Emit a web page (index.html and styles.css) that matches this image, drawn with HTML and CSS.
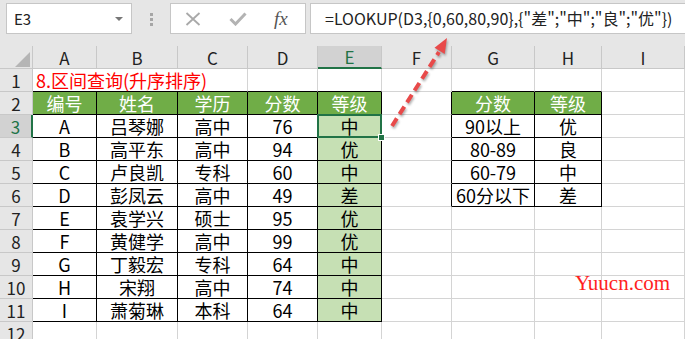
FILE: index.html
```html
<!DOCTYPE html>
<html lang="zh-CN">
<head>
  <meta charset="UTF-8">
  <meta name="viewport" content="width=device-width, initial-scale=1.0">
  <title>区间查询</title>
  <link rel="stylesheet" href="styles.css">
</head>
<body>
  <div class="formula-bar">
    <div class="name-box"><span>E3</span><span class="caret"></span></div>
    <div class="grip"><i></i><i></i><i></i></div>
    <div class="fx-box">
      <svg class="icon-x" width="16" height="14" viewBox="0 0 16 14"><path d="M1.5 1 L14.5 13 M14.5 1 L1.5 13" stroke="#a9a9a9" stroke-width="1.8" fill="none"/></svg>
      <svg class="icon-ok" width="18" height="14" viewBox="0 0 18 14"><path d="M1.5 7 L6.5 12 L16.5 1.5" stroke="#b3b3b3" stroke-width="3" fill="none"/></svg>
      <span class="fx">fx</span>
    </div>
    <div class="formula">=LOOKUP(D3,{0,60,80,90},{"差";"中";"良";"优"})</div>
  </div>

  <div class="sheet">
    <!-- column headers -->
    <div class="corner"><span class="tri"></span></div>
    <div class="hd">A</div><div class="hd">B</div><div class="hd">C</div><div class="hd">D</div>
    <div class="hd sel">E</div><div class="hd">F</div><div class="hd">G</div><div class="hd">H</div><div class="hd">I</div>

    <!-- row 1 -->
    <div class="rh">1</div>
    <div class="title tb">8.区间查询(升序排序)</div>
    <div class="tb"></div><div class="tb"></div><div></div><div class="tb"></div><div class="tb"></div><div></div>

    <!-- row 2 -->
    <div class="rh">2</div>
    <div class="t g">编号</div><div class="t g">姓名</div><div class="t g">学历</div><div class="t g">分数</div><div class="t g">等级</div>
    <div class="tl"></div><div class="t g">分数</div><div class="t g">等级</div><div></div>

    <!-- row 3 -->
    <div class="rh sel">3</div>
    <div class="t">A</div><div class="t">吕琴娜</div><div class="t">高中</div><div class="t">76</div><div class="t lv active">中</div>
    <div class="tl"></div><div class="t">90以上</div><div class="t">优</div><div></div>

    <div class="rh">4</div>
    <div class="t">B</div><div class="t">高平东</div><div class="t">高中</div><div class="t">94</div><div class="t lv">优</div>
    <div class="tl"></div><div class="t">80-89</div><div class="t">良</div><div></div>

    <div class="rh">5</div>
    <div class="t">C</div><div class="t">卢良凯</div><div class="t">专科</div><div class="t">60</div><div class="t lv">中</div>
    <div class="tl"></div><div class="t">60-79</div><div class="t">中</div><div></div>

    <div class="rh">6</div>
    <div class="t">D</div><div class="t">彭凤云</div><div class="t">高中</div><div class="t">49</div><div class="t lv">差</div>
    <div class="tl"></div><div class="t">60分以下</div><div class="t">差</div><div></div>

    <div class="rh">7</div>
    <div class="t">E</div><div class="t">袁学兴</div><div class="t">硕士</div><div class="t">95</div><div class="t lv">优</div>
    <div></div><div></div><div></div><div></div>

    <div class="rh">8</div>
    <div class="t">F</div><div class="t">黄健学</div><div class="t">高中</div><div class="t">99</div><div class="t lv">优</div>
    <div></div><div></div><div></div><div></div>

    <div class="rh">9</div>
    <div class="t">G</div><div class="t">丁毅宏</div><div class="t">专科</div><div class="t">64</div><div class="t lv">中</div>
    <div></div><div></div><div></div><div></div>

    <div class="rh">10</div>
    <div class="t">H</div><div class="t">宋翔</div><div class="t">高中</div><div class="t">74</div><div class="t lv">中</div>
    <div></div><div></div><div></div><div></div>

    <div class="rh">11</div>
    <div class="t">I</div><div class="t">萧菊琳</div><div class="t">本科</div><div class="t">64</div><div class="t lv">中</div>
    <div></div><div></div><div></div><div></div>

    <div class="rh">12</div>
    <div></div><div></div><div></div><div></div><div></div><div></div><div></div><div></div><div></div>
  </div>

  <!-- arrow pointing at the formula -->
  <svg class="arrow" width="685" height="339" viewBox="0 0 685 339">
    <line x1="392" y1="126" x2="439" y2="52" stroke="#e84a4a" stroke-width="4" stroke-dasharray="9 5"/>
    <polygon points="447,38 444.7,54.1 434.5,47.7" fill="#e84a4a"/>
  </svg>

  <div class="watermark">Yuucn.com</div>
</body>
</html>
```

FILE: styles.css
```css
body {
  margin: 0;
  position: relative;
  width: 685px;
  height: 339px;
  overflow: hidden;
  background-color: #fff;
  font-family: "Noto Sans CJK SC", "Noto Sans", sans-serif;
}

/* formula bar */
.formula-bar {
  display: flex;
  align-items: flex-start;
  height: 46px;
  padding-top: 3px;
  box-sizing: border-box;
  background-color: #e6e6e6;
}

.name-box {
  margin-left: 6px;
  width: 126px;
  height: 31px;
  box-sizing: border-box;
  border: 1px solid #c6c6c6;
  background-color: #fff;
  display: flex;
  align-items: center;
  justify-content: space-between;
  padding: 0 8px 0 7px;
  font-size: 15px;
  color: #222;
}

.caret {
  width: 0;
  height: 0;
  border-left: 4px solid transparent;
  border-right: 4px solid transparent;
  border-top: 4px solid #777;
}

.grip {
  width: 38px;
  display: flex;
  flex-direction: column;
  align-items: center;
  gap: 2px;
  padding-top: 10px;
}

.grip i {
  width: 3px;
  height: 3px;
  background-color: #a6a6a6;
}

.fx-box {
  width: 136px;
  height: 31px;
  box-sizing: border-box;
  border: 1px solid #c6c6c6;
  background-color: #fff;
  display: flex;
  align-items: center;
  padding-left: 14px;
}

.icon-ok {
  margin-left: 28px;
}

.fx {
  margin-left: 27px;
  font-family: "Liberation Serif", serif;
  font-style: italic;
  font-size: 19px;
  color: #555;
}

.formula {
  margin-left: 4px;
  flex: 1;
  height: 31px;
  box-sizing: border-box;
  border: 1px solid #c6c6c6;
  border-right: none;
  background-color: #fff;
  padding-left: 14px;
  font-size: 16px;
  line-height: 29px;
  white-space: nowrap;
  color: #222;
}

/* sheet grid */
.sheet {
  display: grid;
  grid-template-columns: 33px 64px 81px 70px 70px 64px 70px 83px 67px 83px;
  grid-auto-rows: 23px;
  font-size: 18px;
}

.sheet > div {
  box-sizing: border-box;
  border-right: 1px solid #d4d4d4;
  border-bottom: 1px solid #d4d4d4;
  display: flex;
  align-items: center;
  justify-content: center;
  line-height: 1;
  white-space: nowrap;
  color: #000;
}

.sheet > .corner,
.sheet > .hd,
.sheet > .rh {
  background-color: #e6e6e6;
  border-color: #c8c8c8;
  color: #222;
  font-size: 17px;
}

.sheet > .corner {
  align-items: flex-end;
  justify-content: flex-end;
  padding: 0 2px 1px 0;
}

.tri {
  width: 0;
  height: 0;
  border-left: 15px solid transparent;
  border-bottom: 15px solid #b5b5b5;
}

.sheet > .hd.sel {
  background-color: #d2d2d2;
  color: #217346;
  border-bottom: 2px solid #217346;
}

.sheet > .rh.sel {
  background-color: #d2d2d2;
  color: #217346;
  border-right: 2px solid #217346;
}

.sheet > .title {
  grid-column: span 3;
  justify-content: flex-start;
  padding-left: 3px;
  color: #ff0000;
}

.sheet > .tb {
  border-bottom-color: #000;
}

.sheet > .tl {
  border-right-color: #000;
}

.sheet > .t {
  border-right-color: #000;
  border-bottom-color: #000;
}

.sheet > .g {
  background-color: #70ad47;
  color: #fff;
}

.sheet > .lv {
  background-color: #c6e0b4;
}

.sheet > .active {
  position: relative;
}

.active::before {
  content: "";
  position: absolute;
  top: -1px;
  left: -1px;
  right: -1px;
  bottom: -1px;
  border: 2px solid #217346;
}

.active::after {
  content: "";
  position: absolute;
  right: -4px;
  bottom: -4px;
  width: 5px;
  height: 5px;
  background-color: #217346;
  border: 1px solid #fff;
}

/* overlays */
.arrow {
  position: absolute;
  left: 0;
  top: 0;
  pointer-events: none;
  filter: drop-shadow(1px 2px 1px rgba(0, 0, 0, 0.3));
}

.watermark {
  position: absolute;
  left: 575px;
  top: 273px;
  font-family: "Liberation Serif", serif;
  font-size: 21px;
  line-height: 21px;
  color: #ff1f1f;
}
```
